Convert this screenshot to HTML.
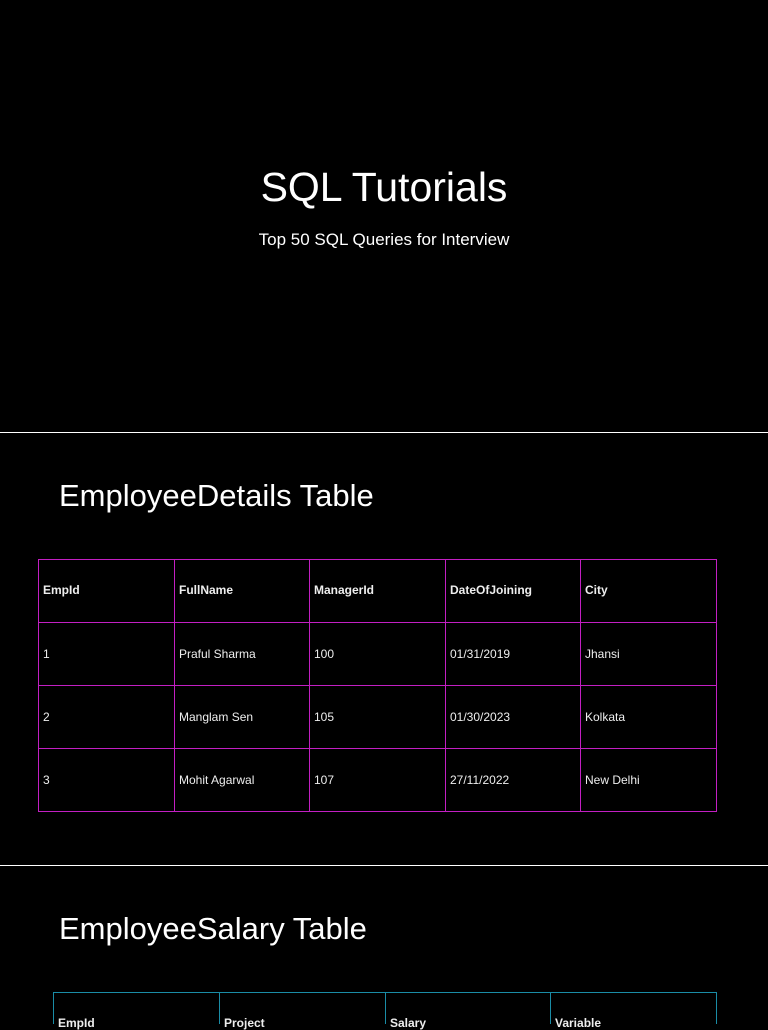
<!DOCTYPE html>
<html><head><meta charset="utf-8"><style>
html,body{margin:0;padding:0;background:#000;width:768px;height:1024px;overflow:hidden;font-family:"Liberation Sans",sans-serif;color:#fff;}
.a{position:absolute;white-space:nowrap;}
.line{position:absolute;left:0;width:768px;height:1px;background:#fff;}
.c{position:absolute;font-size:12px;color:#eee;white-space:nowrap;}
.b{font-weight:bold;}
.v{position:absolute;width:1px;}
.hz{position:absolute;height:1px;}
</style></head><body>
<div class="a" style="left:0;width:768px;top:164px;text-align:center;font-size:41px;color:#fff">SQL Tutorials</div>
<div class="a" style="left:0;width:768px;top:230px;text-align:center;font-size:17px">Top 50 SQL Queries for Interview</div>
<div class="line" style="top:432px"></div>
<div class="a" style="left:59px;top:478px;font-size:31px">EmployeeDetails Table</div>

<div class="hz" style="left:38px;width:679px;top:559px;background:#c21fc2"></div>
<div class="hz" style="left:38px;width:679px;top:622px;background:#c21fc2"></div>
<div class="hz" style="left:38px;width:679px;top:685px;background:#c21fc2"></div>
<div class="hz" style="left:38px;width:679px;top:748px;background:#c21fc2"></div>
<div class="hz" style="left:38px;width:679px;top:811px;background:#c21fc2"></div>
<div class="v" style="left:38px;top:559px;height:253px;background:#c21fc2"></div>
<div class="v" style="left:174px;top:559px;height:253px;background:#c21fc2"></div>
<div class="v" style="left:309px;top:559px;height:253px;background:#c21fc2"></div>
<div class="v" style="left:445px;top:559px;height:253px;background:#c21fc2"></div>
<div class="v" style="left:580px;top:559px;height:253px;background:#c21fc2"></div>
<div class="v" style="left:716px;top:559px;height:253px;background:#c21fc2"></div>

<div class="c b" style="left:43px;top:583px">EmpId</div><div class="c b" style="left:179px;top:583px">FullName</div><div class="c b" style="left:314px;top:583px">ManagerId</div><div class="c b" style="left:450px;top:583px">DateOfJoining</div><div class="c b" style="left:585px;top:583px">City</div>
<div class="c" style="left:43px;top:647px">1</div><div class="c" style="left:179px;top:647px">Praful Sharma</div><div class="c" style="left:314px;top:647px">100</div><div class="c" style="left:450px;top:647px">01/31/2019</div><div class="c" style="left:585px;top:647px">Jhansi</div>
<div class="c" style="left:43px;top:710px">2</div><div class="c" style="left:179px;top:710px">Manglam Sen</div><div class="c" style="left:314px;top:710px">105</div><div class="c" style="left:450px;top:710px">01/30/2023</div><div class="c" style="left:585px;top:710px">Kolkata</div>
<div class="c" style="left:43px;top:773px">3</div><div class="c" style="left:179px;top:773px">Mohit Agarwal</div><div class="c" style="left:314px;top:773px">107</div><div class="c" style="left:450px;top:773px">27/11/2022</div><div class="c" style="left:585px;top:773px">New Delhi</div>

<div class="line" style="top:865px"></div>
<div class="a" style="left:59px;top:911px;font-size:31px">EmployeeSalary Table</div>

<div class="hz" style="left:53px;width:664px;top:992px;background:#1a8ca6"></div>
<div class="v" style="left:53px;top:992px;height:32px;background:#1a8ca6"></div>
<div class="v" style="left:219px;top:992px;height:32px;background:#1a8ca6"></div>
<div class="v" style="left:385px;top:992px;height:32px;background:#1a8ca6"></div>
<div class="v" style="left:550px;top:992px;height:32px;background:#1a8ca6"></div>
<div class="v" style="left:716px;top:992px;height:32px;background:#1a8ca6"></div>
<div class="c b" style="left:58px;top:1016px">EmpId</div><div class="c b" style="left:224px;top:1016px">Project</div><div class="c b" style="left:390px;top:1016px">Salary</div><div class="c b" style="left:555px;top:1016px">Variable</div>
</body></html>
